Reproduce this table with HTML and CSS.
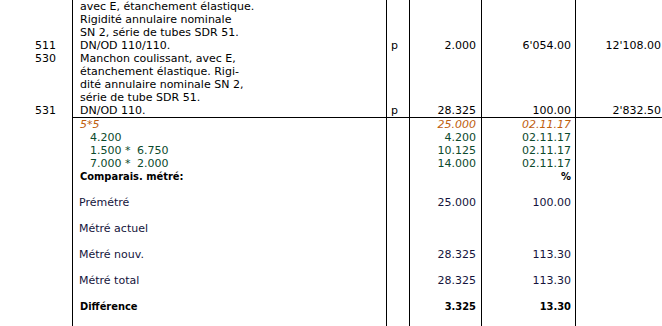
FILE: index.html
```html
<!DOCTYPE html>
<html lang="fr">
<head>
<meta charset="utf-8">
<title>Métré</title>
<link rel="stylesheet" href="styles.css">
</head>
<body>
<div class="sheet">
  <!-- top block -->
  <div class="cell c-no">
    <div class="ln"></div><div class="ln"></div><div class="ln"></div>
    <div class="ln">511</div><div class="ln">530</div>
    <div class="ln"></div><div class="ln"></div><div class="ln"></div>
    <div class="ln">531</div>
  </div>
  <div class="cell c-desc">
    <div class="ln">avec E, étanchement élastique.</div>
    <div class="ln">Rigidité annulaire nominale</div>
    <div class="ln">SN 2, série de tubes SDR 51.</div>
    <div class="ln">DN/OD 110/110.</div>
    <div class="ln">Manchon coulissant, avec E,</div>
    <div class="ln">étanchement élastique. Rigi-</div>
    <div class="ln">dité annulaire nominale SN 2,</div>
    <div class="ln">série de tube SDR 51.</div>
    <div class="ln">DN/OD 110.</div>
  </div>
  <div class="cell c-unit">
    <div class="ln"></div><div class="ln"></div><div class="ln"></div>
    <div class="ln">p</div>
    <div class="ln"></div><div class="ln"></div><div class="ln"></div><div class="ln"></div>
    <div class="ln">p</div>
  </div>
  <div class="cell c-num">
    <div class="ln"></div><div class="ln"></div><div class="ln"></div>
    <div class="ln">2.000</div>
    <div class="ln"></div><div class="ln"></div><div class="ln"></div><div class="ln"></div>
    <div class="ln">28.325</div>
  </div>
  <div class="cell c-price">
    <div class="ln"></div><div class="ln"></div><div class="ln"></div>
    <div class="ln">6'054.00</div>
    <div class="ln"></div><div class="ln"></div><div class="ln"></div><div class="ln"></div>
    <div class="ln">100.00</div>
  </div>
  <div class="cell c-total">
    <div class="ln"></div><div class="ln"></div><div class="ln"></div>
    <div class="ln">12'108.00</div>
    <div class="ln"></div><div class="ln"></div><div class="ln"></div><div class="ln"></div>
    <div class="ln">2'832.50</div>
  </div>

  <!-- bottom block -->
  <div class="cell c-no"></div>
  <div class="cell c-desc ruled">
    <div class="ln orange">5*5</div>
    <div class="ln green sub"><span class="f">4.200</span></div>
    <div class="ln green sub"><span class="f">1.500 *</span>6.750</div>
    <div class="ln green sub"><span class="f">7.000 *</span>2.000</div>
    <div class="ln bold">Comparais. métré:</div>
    <div class="ln"></div>
    <div class="ln navy lab">Prémétré</div>
    <div class="ln"></div>
    <div class="ln navy lab">Métré actuel</div>
    <div class="ln"></div>
    <div class="ln navy lab">Métré nouv.</div>
    <div class="ln"></div>
    <div class="ln navy lab">Métré total</div>
    <div class="ln"></div>
    <div class="ln bold">Différence</div>
  </div>
  <div class="cell c-unit ruled"></div>
  <div class="cell c-num ruled">
    <div class="ln orange">25.000</div>
    <div class="ln green">4.200</div>
    <div class="ln green">10.125</div>
    <div class="ln green">14.000</div>
    <div class="ln"></div>
    <div class="ln"></div>
    <div class="ln navy">25.000</div>
    <div class="ln"></div>
    <div class="ln"></div>
    <div class="ln"></div>
    <div class="ln navy">28.325</div>
    <div class="ln"></div>
    <div class="ln navy">28.325</div>
    <div class="ln"></div>
    <div class="ln bold">3.325</div>
  </div>
  <div class="cell c-price ruled">
    <div class="ln orange">02.11.17</div>
    <div class="ln green">02.11.17</div>
    <div class="ln green">02.11.17</div>
    <div class="ln green">02.11.17</div>
    <div class="ln bold">%</div>
    <div class="ln"></div>
    <div class="ln navy">100.00</div>
    <div class="ln"></div>
    <div class="ln"></div>
    <div class="ln"></div>
    <div class="ln navy">113.30</div>
    <div class="ln"></div>
    <div class="ln navy">113.30</div>
    <div class="ln"></div>
    <div class="ln bold">13.30</div>
  </div>
  <div class="cell c-total ruled"></div>
</div>
</body>
</html>
```

FILE: styles.css
```css
html, body {
  margin: 0;
  padding: 0;
  background: #ffffff;
}
body {
  width: 662px;
  height: 326px;
  overflow: hidden;
  font-family: "DejaVu Sans", sans-serif;
  font-size: 11px;
  color: #000;
}
.sheet {
  display: grid;
  grid-template-columns: 72px 314px 23px 72px 94px 87px;
  grid-template-rows: 117px 209px;
}
.cell {
  box-sizing: border-box;
  overflow: hidden;
  white-space: nowrap;
}
.c-desc, .c-unit, .c-num, .c-price, .c-total {
  border-left: 1px solid #000;
}
.ruled {
  border-top: 1px solid #000;
}
.ln {
  height: 13px;
  line-height: 13px;
}
.c-no { padding-left: 35px; }
.c-desc { padding-left: 7px; }
.c-unit { padding-left: 4px; }
.c-num { text-align: right; padding-right: 5px; }
.c-price { text-align: right; padding-right: 4px; }
.c-total { text-align: right; padding-right: 1px; }
.orange { color: #c0600f; font-style: italic; }
.green { color: #0c4a2c; }
.navy { color: #14143c; }
.bold {
  font-family: "DejaVu Sans Condensed", "DejaVu Sans", sans-serif;
  font-weight: bold;
}
.sub { padding-left: 10px; }
.lab { margin-left: -1px; }
.f { display: inline-block; width: 47px; }
```
